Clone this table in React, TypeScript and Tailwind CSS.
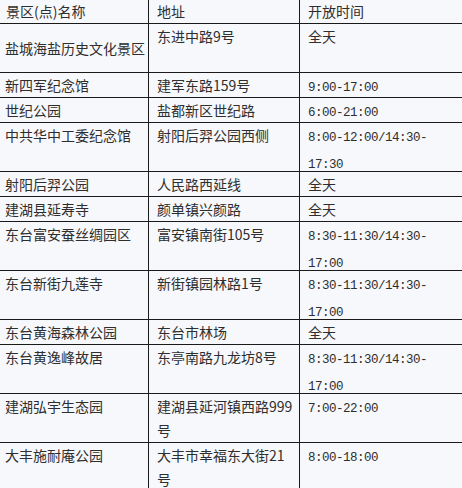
type Row = {
  name: string;
  address: React.ReactNode;
  hours: React.ReactNode;
  tall?: boolean;
  centerName?: boolean;
};

const rows: Row[] = [
  { name: "盐城海盐历史文化景区", address: "东进中路9号", hours: "全天", tall: true, centerName: true },
  { name: "新四军纪念馆", address: "建军东路159号", hours: <Time>9:00-17:00</Time> },
  { name: "世纪公园", address: "盐都新区世纪路", hours: <Time>6:00-21:00</Time> },
  {
    name: "中共华中工委纪念馆",
    address: "射阳后羿公园西侧",
    hours: (
      <Time>
        8:00-12:00/14:30-
        <br />
        17:30
      </Time>
    ),
    tall: true,
  },
  { name: "射阳后羿公园", address: "人民路西延线", hours: "全天" },
  { name: "建湖县延寿寺", address: "颜单镇兴颜路", hours: "全天" },
  {
    name: "东台富安蚕丝绸园区",
    address: "富安镇南街105号",
    hours: (
      <Time>
        8:30-11:30/14:30-
        <br />
        17:00
      </Time>
    ),
    tall: true,
  },
  {
    name: "东台新街九莲寺",
    address: "新街镇园林路1号",
    hours: (
      <Time>
        8:30-11:30/14:30-
        <br />
        17:00
      </Time>
    ),
    tall: true,
  },
  { name: "东台黄海森林公园", address: "东台市林场", hours: "全天" },
  {
    name: "东台黄逸峰故居",
    address: "东亭南路九龙坊8号",
    hours: (
      <Time>
        8:30-11:30/14:30-
        <br />
        17:00
      </Time>
    ),
    tall: true,
  },
  {
    name: "建湖弘宇生态园",
    address: (
      <>
        建湖县延河镇西路999
        <br />号
      </>
    ),
    hours: <Time>7:00-22:00</Time>,
    tall: true,
  },
  {
    name: "大丰施耐庵公园",
    address: (
      <>
        大丰市幸福东大街21
        <br />号
      </>
    ),
    hours: <Time>8:00-18:00</Time>,
    tall: true,
  },
];

function Time({ children }: { children: React.ReactNode }) {
  return (
    <span className="font-['Liberation_Mono',monospace] text-[12.5px] tracking-[-0.5px]">{children}</span>
  );
}

export default function App() {
  return (
    <div className="min-h-screen w-[462px] overflow-hidden bg-[#f7f8fc] font-['Noto_Sans_CJK_SC','Noto_Sans',sans-serif] text-[14px] leading-[24px] text-[#2e2e2e]">
      <div className="grid grid-cols-[149px_151px_162px] border-b border-[#1a1a1a]">
        <div className="h-[23px] border-r border-[#1a1a1a] pl-[6px] leading-[23px]">景区(点)名称</div>
        <div className="h-[23px] border-r border-[#1a1a1a] pl-[8px] leading-[23px]">地址</div>
        <div className="h-[23px] pl-[8px] leading-[23px]">开放时间</div>
      </div>

      {rows.map((row) => (
        <div
          key={row.name}
          className={`grid grid-cols-[149px_151px_162px] border-b border-[#1a1a1a] ${row.tall ? "h-[49px]" : "h-[25px]"}`}
        >
          <div
            className={`flex border-r border-[#1a1a1a] pl-[5px] whitespace-nowrap ${row.centerName ? "items-center pl-[3px]" : "items-start"}`}
          >
            {row.name}
          </div>
          <div className="border-r border-[#1a1a1a] pl-[8px] whitespace-nowrap">{row.address}</div>
          <div className="pl-[8px] whitespace-nowrap">{row.hours}</div>
        </div>
      ))}
    </div>
  );
}
